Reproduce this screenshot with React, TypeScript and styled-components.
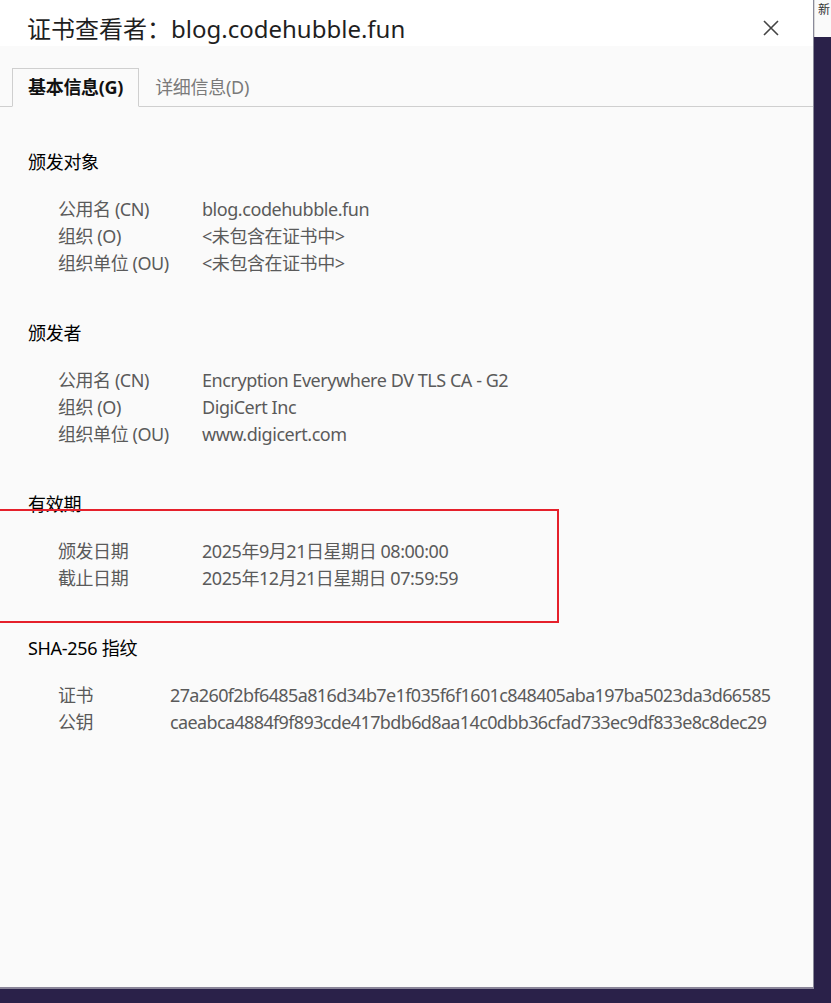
import React from 'react';
import styled, { createGlobalStyle } from 'styled-components';

const GlobalStyle = createGlobalStyle`
  html, body {
    margin: 0;
    padding: 0;
    background: #2a2149;
  }
  body {
    font-family: "Noto Sans", "Noto Sans CJK SC", sans-serif;
  }
`;

const Screen = styled.div`
  display: flex;
  align-items: flex-start;
  height: 1003px;
  overflow: hidden;
`;

const Dialog = styled.div`
  position: relative;
  display: flex;
  flex-direction: column;
  width: 814px;
  height: 989px;
  border-right: 1px solid #8a8a9a;
  border-bottom: 2px solid #8a8599;
  box-sizing: border-box;
  overflow: hidden;
  background: #fafafa;
`;

const Header = styled.div`
  display: flex;
  align-items: flex-start;
  justify-content: space-between;
  height: 46px;
  padding: 13px 34px 0 27px;
  box-sizing: border-box;
  background: #ffffff;
`;

const Title = styled.h1`
  margin: 0;
  font-size: 24px;
  font-weight: 400;
  line-height: 32px;
  color: #1f1f1f;
`;

const CloseButton = styled.button`
  display: flex;
  align-items: center;
  justify-content: center;
  width: 16px;
  height: 16px;
  margin-top: 7px;
  padding: 0;
  border: none;
  background: transparent;
  cursor: pointer;
`;

const TabBar = styled.div`
  display: flex;
  align-items: flex-end;
  margin-top: 22px;
  padding-left: 12px;
  border-bottom: 1px solid #cfcfcf;
`;

const Tab = styled.div<{ active?: boolean }>`
  height: 39px;
  display: flex;
  align-items: center;
  padding: 0 15px 3px 15px;
  box-sizing: border-box;
  margin-bottom: -1px;
  font-size: 18px;
  letter-spacing: -0.3px;
  font-weight: ${({ active }) => (active ? 700 : 400)};
  color: ${({ active }) => (active ? '#111' : '#7a7a7a')};
  background: ${({ active }) => (active ? '#fafafa' : 'transparent')};
  border: 1px solid ${({ active }) => (active ? '#cfcfcf' : 'transparent')};
  border-bottom-color: ${({ active }) => (active ? '#fafafa' : 'transparent')};
`;

const Content = styled.div`
  display: flex;
  flex-direction: column;
  gap: 43px;
  padding: 42px 0 0 28px;
`;

const Section = styled.section`
  display: flex;
  flex-direction: column;
`;

const Heading = styled.h2`
  margin: 0 0 20px;
  font-size: 18px;
  font-weight: 400;
  line-height: 27px;
  letter-spacing: -0.3px;
  color: #000;
`;

const Rows = styled.div<{ labelWidth: number }>`
  display: grid;
  grid-template-columns: ${({ labelWidth }) => labelWidth}px auto;
  padding-left: 30px;
  font-size: 18px;
  line-height: 27px;
  color: #5a5a5a;
`;

const Cell = styled.div<{ tight?: boolean }>`
  white-space: nowrap;
  letter-spacing: ${({ tight }) => (tight ? '-0.63px' : '-0.45px')};
`;

const Highlight = styled.div`
  position: absolute;
  left: -3px;
  top: 509px;
  width: 562px;
  height: 114px;
  border: 2px solid #e5202b;
  box-sizing: border-box;
  pointer-events: none;
`;

const SideStrip = styled.div`
  width: 17px;
  height: 37px;
  overflow: hidden;
  background: #fafafa;
  border-left: 1px solid #d8d8d8;
  box-sizing: border-box;
  font-size: 12px;
  line-height: 20px;
  color: #333;
  padding-left: 3px;
`;

type Field = [string, string];

const sections: { title: string; labelWidth: number; hash?: boolean; fields: Field[] }[] = [
  {
    title: '颁发对象',
    labelWidth: 144,
    fields: [
      ['公用名 (CN)', 'blog.codehubble.fun'],
      ['组织 (O)', '<未包含在证书中>'],
      ['组织单位 (OU)', '<未包含在证书中>'],
    ],
  },
  {
    title: '颁发者',
    labelWidth: 144,
    fields: [
      ['公用名 (CN)', 'Encryption Everywhere DV TLS CA - G2'],
      ['组织 (O)', 'DigiCert Inc'],
      ['组织单位 (OU)', 'www.digicert.com'],
    ],
  },
  {
    title: '有效期',
    labelWidth: 144,
    fields: [
      ['颁发日期', '2025年9月21日星期日 08:00:00'],
      ['截止日期', '2025年12月21日星期日 07:59:59'],
    ],
  },
  {
    title: 'SHA-256 指纹',
    labelWidth: 112,
    hash: true,
    fields: [
      ['证书', '27a260f2bf6485a816d34b7e1f035f6f1601c848405aba197ba5023da3d66585'],
      ['公钥', 'caeabca4884f9f893cde417bdb6d8aa14c0dbb36cfad733ec9df833e8c8dec29'],
    ],
  },
];

export default function App() {
  return (
    <>
      <GlobalStyle />
      <Screen>
        <Dialog>
          <Header>
            <Title>证书查看者：blog.codehubble.fun</Title>
            <CloseButton aria-label="关闭">
              <svg width="16" height="16" viewBox="0 0 16 16">
                <path d="M1 1L15 15M15 1L1 15" stroke="#444" strokeWidth="1.6" />
              </svg>
            </CloseButton>
          </Header>
          <TabBar>
            <Tab active>基本信息(G)</Tab>
            <Tab>详细信息(D)</Tab>
          </TabBar>
          <Content>
            {sections.map((s) => (
              <Section key={s.title}>
                <Heading>{s.title}</Heading>
                <Rows labelWidth={s.labelWidth}>
                  {s.fields.map(([k, v]) => (
                    <React.Fragment key={k}>
                      <Cell>{k}</Cell>
                      <Cell tight={s.hash}>{v}</Cell>
                    </React.Fragment>
                  ))}
                </Rows>
              </Section>
            ))}
          </Content>
          <Highlight />
        </Dialog>
        <SideStrip>新</SideStrip>
      </Screen>
    </>
  );
}
